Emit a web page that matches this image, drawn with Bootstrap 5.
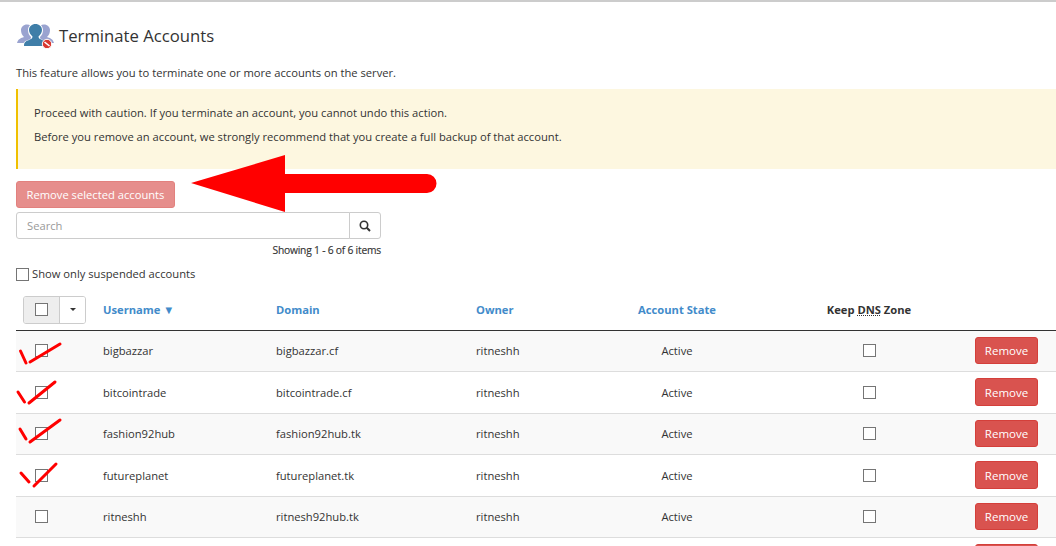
<!DOCTYPE html>
<html lang="en">
<head>
<meta charset="utf-8">
<title>Terminate Accounts</title>
<link href="https://cdn.jsdelivr.net/npm/bootstrap@5.3.0/dist/css/bootstrap.min.css" rel="stylesheet">
<style>
html,body{overflow:hidden;height:546px}
body{font-family:"Open Sans",sans-serif;font-size:11.2px;line-height:1.5;color:#333;border-top:2px solid #ccc;background:#fff}
.page-wrap{position:relative;padding:0 0 0 16px;height:544px;overflow:hidden}
.page-head{height:47px;padding-top:21px;gap:6px}
.page-head svg{margin-left:1px;margin-right:-1px}
.page-head h1{font-size:16.7px;font-weight:400;margin:0;color:#333;line-height:26px}
.intro{margin:15px 0 8px;line-height:17px}
.caution{height:80px;background:#fdf7e0;border-left:2px solid #f0c000;padding:15px 16px;color:#333}
.caution p{margin:0 0 7px;line-height:17px}
.remove-all{--bs-btn-disabled-bg:#d9534f;--bs-btn-disabled-border-color:#d43f3a;margin-top:12px;height:27px;width:159px;font-size:11.2px;padding:0;line-height:25px;border-radius:3px;display:block}
.search-box{width:365px;margin-top:4px;height:27px}
.search-box .form-control{font-size:11.2px;height:27px;padding:0 10px;border-color:#ccc;border-radius:3px 0 0 3px;color:#333}
.search-box .form-control::placeholder{color:#999}
.search-box .btn{width:32px;padding:0;border-color:#ccc;border-radius:0 3px 3px 0;background:#fff;display:flex;align-items:center;justify-content:center}
.showing{width:365px;text-align:right;font-size:10.3px;line-height:14px;margin-top:4px;letter-spacing:-.22px;-webkit-text-stroke:.15px #333}
input.tick[type=checkbox]{width:13px;height:13px;border:1px solid #757575;border-radius:0;margin:0;flex:none;background-color:#fff;float:none;display:block}
input.tick.row-pick[type=checkbox]{margin-left:12px}
input.tick.mx-auto[type=checkbox]{margin-left:auto;margin-right:auto}
.only-susp{margin-top:10px;gap:3px;line-height:14px}
.accounts{table-layout:fixed;width:1040px;margin:14.5px 0 0;--bs-table-striped-bg:#f9f9f9;--bs-table-color:#333;--bs-table-striped-color:#333;--bs-table-border-color:#ddd;font-size:11.2px}
.accounts th{padding:1px 7px 5px;border-bottom:1px solid #333;font-weight:700;vertical-align:middle;height:34px}
.accounts th:first-child{padding:0 7px 6px}
.accounts th a{color:#428bca;text-decoration:none}
.accounts td{padding:7.6px 7px 5.4px;vertical-align:middle;height:41.5px}
.accounts td.box{padding:6.5px 7px 6.5px}
.accounts td.act{padding:6px 7px 6.5px;vertical-align:top}
.accounts .cen{text-align:center}
.accounts abbr{text-decoration:underline dotted;cursor:help}
.pick{width:63px;height:28px;border:1px solid #ccc;border-radius:3px;overflow:hidden}
.pick-l{width:36px;background:#eee;border-right:1px solid #ccc;display:flex;align-items:center;justify-content:center}
.pick-r{flex:1;display:flex;align-items:center;justify-content:center;background:#fff}
.pick-r i{display:block;border:3px solid transparent;border-top-color:#333;border-bottom:0}
.remove-one{width:63px;height:27.5px;padding:1px 0 0;font-size:11.5px;line-height:1;background:#d9534f;border-color:#d43f3a;border-radius:3px;color:#fff;display:block}
.marks{position:absolute;left:0;top:-2px;pointer-events:none}
</style>
</head>
<body>
<div class="page-wrap">
  <div class="d-flex align-items-center page-head">
    <svg width="37" height="26" viewBox="0 0 37 26" aria-hidden="true">
      <path d="M0 20c1-4 4-5 7-6-2-2-3-4-3-7 0-3 2.500-5.500 6-5.500 3 0 5 2 6 5l2 9-2 4.500z" fill="#9aa3d0"/>
      <path d="M37 20c-1-4-4-5-7-6 2-2 3-4 3-7 0-3-2.500-5.500-6-5.500-3 0-5 2-6 5l-2 9 2 4.500z" fill="#9aa3d0"/>
      <path d="M6 24c0-5 2-6 5-7 2-1 3-1 3-3-2-2-3-4-3-7 0-4 3.500-7 7.500-7s7.500 3 7.500 7c0 3-1 5-3 7 0 2 1 2 3 3 3 1 5 2 5 7z" fill="#fff"/>
      <path d="M7 23c0-4 2-5 5-6 2-1 3.500-1.500 3.500-3.500-2-2-3.500-4-3.500-6.500 0-3.500 3-6 6.500-6s6.500 2.500 6.500 6c0 2.500-1.500 4.500-3.500 6.500 0 2 1.500 2.500 3.500 3.500 3 1 5 2 5 6z" fill="#3f7ea8"/>
      <circle cx="30" cy="21" r="4.700" fill="#d9372f" stroke="#fff"/>
      <path d="M27.500 19l5 4" stroke="#fff" stroke-width="1.600"/>
    </svg>
    <h1>Terminate Accounts</h1>
  </div>
  <p class="intro">This feature allows you to terminate one or more accounts on the server.</p>
  <div class="caution">
    <p>Proceed with caution. If you terminate an account, you cannot undo this action.</p>
    <p>Before you remove an account, we strongly recommend that you create a full backup of that account.</p>
  </div>
  <button type="button" class="btn btn-danger remove-all" disabled>Remove selected accounts</button>
  <div class="input-group search-box">
    <input type="text" class="form-control" placeholder="Search" aria-label="Search">
    <button type="button" class="btn" aria-label="Search">
      <svg width="12" height="12" viewBox="0 0 12 12" aria-hidden="true"><circle cx="5" cy="5" r="3.700" fill="none" stroke="#333" stroke-width="1.600"/><path d="M7.800 7.800l3.200 3.200" stroke="#333" stroke-width="2"/></svg>
    </button>
  </div>
  <div class="showing">Showing 1 - 6 of 6 items</div>
  <label class="d-flex align-items-center only-susp"><input type="checkbox" class="form-check-input tick"> Show only suspended accounts</label>
  <table class="table table-striped accounts">
    <colgroup><col style="width:80px"><col style="width:173px"><col style="width:200px"><col style="width:115px"><col style="width:186px"><col style="width:198px"><col style="width:88px"></colgroup>
    <thead>
      <tr>
        <th><div class="d-flex pick"><span class="pick-l"><input type="checkbox" class="form-check-input tick" aria-label="Select all"></span><span class="pick-r"><i></i></span></div></th>
        <th><a href="#">Username ▼</a></th>
        <th><a href="#">Domain</a></th>
        <th><a href="#">Owner</a></th>
        <th class="cen"><a href="#">Account State</a></th>
        <th class="cen">Keep <abbr title="Domain Name System">DNS</abbr> Zone</th>
        <th></th>
      </tr>
    </thead>
    <tbody>
      <tr><td class="box"><input type="checkbox" class="form-check-input tick row-pick" aria-label="Select"></td><td>bigbazzar</td><td>bigbazzar.cf</td><td>ritneshh</td><td class="cen">Active</td><td class="cen box"><input type="checkbox" class="form-check-input tick mx-auto" aria-label="Keep DNS"></td><td class="act"><button type="button" class="btn remove-one">Remove</button></td></tr>
      <tr><td class="box"><input type="checkbox" class="form-check-input tick row-pick" aria-label="Select"></td><td>bitcointrade</td><td>bitcointrade.cf</td><td>ritneshh</td><td class="cen">Active</td><td class="cen box"><input type="checkbox" class="form-check-input tick mx-auto" aria-label="Keep DNS"></td><td class="act"><button type="button" class="btn remove-one">Remove</button></td></tr>
      <tr><td class="box"><input type="checkbox" class="form-check-input tick row-pick" aria-label="Select"></td><td>fashion92hub</td><td>fashion92hub.tk</td><td>ritneshh</td><td class="cen">Active</td><td class="cen box"><input type="checkbox" class="form-check-input tick mx-auto" aria-label="Keep DNS"></td><td class="act"><button type="button" class="btn remove-one">Remove</button></td></tr>
      <tr><td class="box"><input type="checkbox" class="form-check-input tick row-pick" aria-label="Select"></td><td>futureplanet</td><td>futureplanet.tk</td><td>ritneshh</td><td class="cen">Active</td><td class="cen box"><input type="checkbox" class="form-check-input tick mx-auto" aria-label="Keep DNS"></td><td class="act"><button type="button" class="btn remove-one">Remove</button></td></tr>
      <tr><td class="box"><input type="checkbox" class="form-check-input tick row-pick" aria-label="Select"></td><td>ritneshh</td><td>ritnesh92hub.tk</td><td>ritneshh</td><td class="cen">Active</td><td class="cen box"><input type="checkbox" class="form-check-input tick mx-auto" aria-label="Keep DNS"></td><td class="act"><button type="button" class="btn remove-one">Remove</button></td></tr>
      <tr><td></td><td></td><td></td><td></td><td></td><td></td><td class="act"><button type="button" class="btn remove-one" aria-label="Remove">&nbsp;</button></td></tr>
    </tbody>
  </table>
  <svg class="marks" width="1056" height="546" viewBox="0 0 1056 546" aria-hidden="true">
    <path d="M191 183L285 155V174H427a9.500 9.500 0 0 1 0 19H285V212Z" fill="#f00"/>
    <g stroke="#f00" stroke-width="3" stroke-linecap="round" fill="none">
      <path d="M20.500 351L26 363M30 362L60 344"/>
      <path d="M18 392L24.500 402M29 403L55 382"/>
      <path d="M20 429L26 439M30 442L60 420"/>
      <path d="M21 473L29 482M34 486L56 464"/>
    </g>
  </svg>
</div>
</body>
</html>
